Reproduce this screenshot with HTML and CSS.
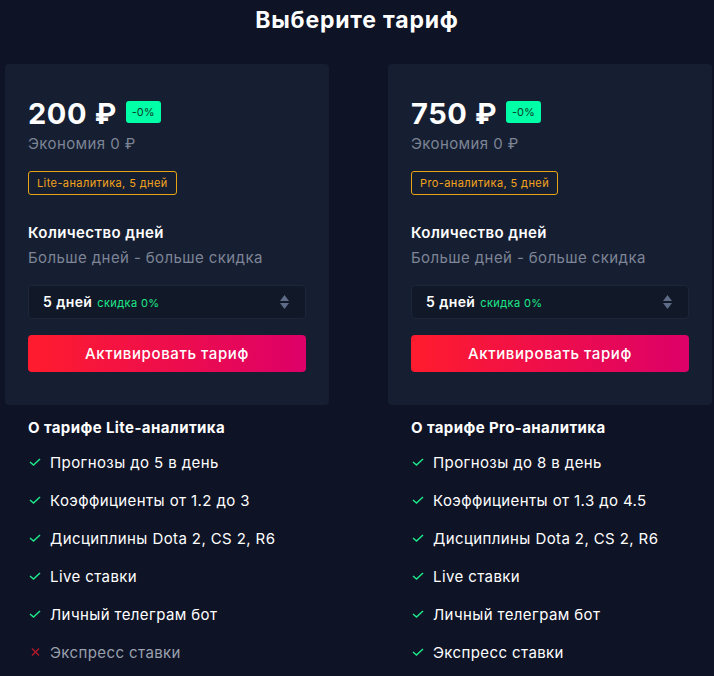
FILE: index.html
```html
<!DOCTYPE html>
<html lang="ru">

<head>
    <meta charset="utf-8">
    <title>Выберите тариф</title>
    <link rel="stylesheet" href="styles.css">
</head>

<body>
    <h1 class="title">Выберите тариф</h1>

    <div class="plans">
        <div class="plan">
            <div class="card">
                <div class="price-row">
                    <span class="price">200 ₽</span>
                    <span class="discount">-0%</span>
                </div>
                <div class="saving">Экономия 0 ₽</div>
                <div class="tag">Lite-аналитика, 5 дней</div>

                <div class="days-label">Количество дней</div>
                <div class="days-hint">Больше дней - больше скидка</div>

                <div class="select">
                    <span class="select-value">5 дней</span>
                    <span class="select-note">скидка 0%</span>
                    <svg class="select-arrows" width="9" height="14" viewBox="0 0 9 14">
                        <path d="M4.5 0 L9 6 H0 Z" fill="#5d6b86"/>
                        <path d="M4.5 14 L9 8 H0 Z" fill="#5d6b86"/>
                    </svg>
                </div>

                <button class="activate">Активировать тариф</button>
            </div>

            <div class="about">
                <h3 class="about-title">О тарифе Lite-аналитика</h3>
                <ul class="features">
                    <li><svg class="mark" width="12" height="8" viewBox="0 0 12 8"><path d="M1 4 L4.5 7 L11 1" fill="none" stroke="#1ee98a" stroke-width="1.5"/></svg>Прогнозы до 5 в день</li>
                    <li><svg class="mark" width="12" height="8" viewBox="0 0 12 8"><path d="M1 4 L4.5 7 L11 1" fill="none" stroke="#1ee98a" stroke-width="1.5"/></svg>Коэффициенты от 1.2 до 3</li>
                    <li><svg class="mark" width="12" height="8" viewBox="0 0 12 8"><path d="M1 4 L4.5 7 L11 1" fill="none" stroke="#1ee98a" stroke-width="1.5"/></svg>Дисциплины Dota 2, CS 2, R6</li>
                    <li><svg class="mark" width="12" height="8" viewBox="0 0 12 8"><path d="M1 4 L4.5 7 L11 1" fill="none" stroke="#1ee98a" stroke-width="1.5"/></svg>Live ставки</li>
                    <li><svg class="mark" width="12" height="8" viewBox="0 0 12 8"><path d="M1 4 L4.5 7 L11 1" fill="none" stroke="#1ee98a" stroke-width="1.5"/></svg>Личный телеграм бот</li>
                    <li class="off"><svg class="mark" width="12" height="8" viewBox="0 0 12 8"><path d="M3 0.5 L10 7.5 M10 0.5 L3 7.5" fill="none" stroke="#b4182a" stroke-width="1.4"/></svg>Экспресс ставки</li>
                </ul>
            </div>
        </div>

        <div class="plan">
            <div class="card">
                <div class="price-row">
                    <span class="price">750 ₽</span>
                    <span class="discount">-0%</span>
                </div>
                <div class="saving">Экономия 0 ₽</div>
                <div class="tag">Pro-аналитика, 5 дней</div>

                <div class="days-label">Количество дней</div>
                <div class="days-hint">Больше дней - больше скидка</div>

                <div class="select">
                    <span class="select-value">5 дней</span>
                    <span class="select-note">скидка 0%</span>
                    <svg class="select-arrows" width="9" height="14" viewBox="0 0 9 14">
                        <path d="M4.5 0 L9 6 H0 Z" fill="#5d6b86"/>
                        <path d="M4.5 14 L9 8 H0 Z" fill="#5d6b86"/>
                    </svg>
                </div>

                <button class="activate">Активировать тариф</button>
            </div>

            <div class="about">
                <h3 class="about-title">О тарифе Pro-аналитика</h3>
                <ul class="features">
                    <li><svg class="mark" width="12" height="8" viewBox="0 0 12 8"><path d="M1 4 L4.5 7 L11 1" fill="none" stroke="#1ee98a" stroke-width="1.5"/></svg>Прогнозы до 8 в день</li>
                    <li><svg class="mark" width="12" height="8" viewBox="0 0 12 8"><path d="M1 4 L4.5 7 L11 1" fill="none" stroke="#1ee98a" stroke-width="1.5"/></svg>Коэффициенты от 1.3 до 4.5</li>
                    <li><svg class="mark" width="12" height="8" viewBox="0 0 12 8"><path d="M1 4 L4.5 7 L11 1" fill="none" stroke="#1ee98a" stroke-width="1.5"/></svg>Дисциплины Dota 2, CS 2, R6</li>
                    <li><svg class="mark" width="12" height="8" viewBox="0 0 12 8"><path d="M1 4 L4.5 7 L11 1" fill="none" stroke="#1ee98a" stroke-width="1.5"/></svg>Live ставки</li>
                    <li><svg class="mark" width="12" height="8" viewBox="0 0 12 8"><path d="M1 4 L4.5 7 L11 1" fill="none" stroke="#1ee98a" stroke-width="1.5"/></svg>Личный телеграм бот</li>
                    <li><svg class="mark" width="12" height="8" viewBox="0 0 12 8"><path d="M1 4 L4.5 7 L11 1" fill="none" stroke="#1ee98a" stroke-width="1.5"/></svg>Экспресс ставки</li>
                </ul>
            </div>
        </div>
    </div>
</body>

</html>
```

FILE: styles.css
```css
body {
    margin: 0;
    background-color: #0e1326;
    color: #ffffff;
    font-family: 'Inter', 'Noto Sans', sans-serif;
    letter-spacing: 0.4px;
}

.title {
    margin: 0;
    padding-top: 5px;
    height: 59px;
    text-align: center;
    font-size: 23px;
    font-weight: 700;
    line-height: 30px;
    letter-spacing: 0.8px;
}

.plans {
    display: grid;
    grid-template-columns: 324px 324px;
    column-gap: 59px;
    padding-left: 5px;
}

.card {
    background-color: #161e31;
    border-radius: 4px;
    padding: 34px 23px 33px 23px;
}

.price-row {
    display: flex;
    align-items: center;
    gap: 9px;
    height: 30px;
}

.price {
    font-size: 29px;
    font-weight: 700;
    letter-spacing: 0.6px;
}

.discount {
    background-color: #00ffa6;
    color: #0b3b2b;
    font-size: 11px;
    letter-spacing: 0;
    line-height: 14px;
    padding: 4px 6px;
    border-radius: 3px;
    margin-top: -2px;
}

.saving {
    margin-top: 6px;
    color: #7d8596;
    font-size: 15px;
}

.tag {
    display: inline-block;
    margin-top: 18px;
    border: 1px solid #e8a513;
    border-radius: 3px;
    color: #f3a31d;
    font-size: 11px;
    padding: 4px 8px;
}

.days-label {
    margin-top: 28px;
    font-size: 15px;
    font-weight: 600;
}

.days-hint {
    margin-top: 6px;
    color: #7d8596;
    font-size: 15px;
}

.select {
    display: flex;
    align-items: baseline;
    gap: 5px;
    margin-top: 18px;
    height: 34px;
    box-sizing: border-box;
    padding: 0 16px 0 14px;
    line-height: 32px;
    background-color: #111828;
    border: 1px solid #1d2539;
    border-radius: 4px;
}

.select-value {
    font-size: 14px;
    font-weight: 600;
}

.select-note {
    color: #1ee98a;
    font-size: 11px;
}

.select-arrows {
    margin-left: auto;
    align-self: center;
}

.activate {
    display: block;
    width: 100%;
    height: 37px;
    margin-top: 16px;
    border: 0;
    border-radius: 4px;
    background: linear-gradient(90deg, #ff1c2e, #dd0068);
    color: #ffffff;
    font-family: inherit;
    font-size: 15px;
    font-weight: 500;
    letter-spacing: 0.6px;
    cursor: pointer;
}

.about {
    padding: 13px 23px 0 23px;
}

.about-title {
    margin: 0 0 -4px 0;
    font-size: 15px;
    font-weight: 700;
    line-height: 20px;
}

.features {
    list-style: none;
    margin: 0;
    padding: 0;
}

.features li {
    display: flex;
    align-items: center;
    height: 20px;
    margin-top: 18px;
    font-size: 15px;
}

.features li.off {
    color: #9aa0ad;
}

.mark {
    flex-shrink: 0;
    margin: 0 9px 0 1px;
}
```
